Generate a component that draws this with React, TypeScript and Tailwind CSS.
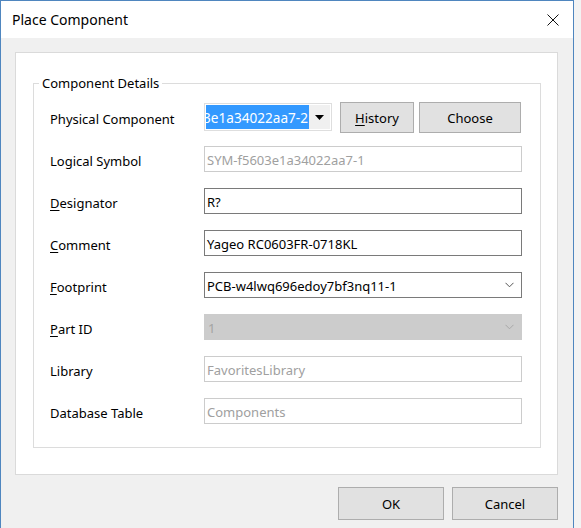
import React from "react";

const font = "font-['Noto_Sans','Open_Sans',sans-serif]";

function U({ children }: { children: React.ReactNode }) {
  return <span className="underline underline-offset-2 decoration-1">{children}</span>;
}

function Chevron({ color }: { color: string }) {
  return (
    <svg width="9" height="6" viewBox="0 0 9 6" className="shrink-0">
      <path d="M0.5 0.8 L4.5 4.8 L8.5 0.8" fill="none" stroke={color} strokeWidth="1" />
    </svg>
  );
}

function Label({ children }: { children: React.ReactNode }) {
  return <div className="text-[13px] leading-[18px] text-black pt-[4px]">{children}</div>;
}

function Row({ label, children }: { label: React.ReactNode; children: React.ReactNode }) {
  return (
    <div className="grid grid-cols-[154px_1fr] items-center h-[42px]">
      <Label>{label}</Label>
      {children}
    </div>
  );
}

function TextBox({ value, disabled }: { value: string; disabled?: boolean }) {
  return (
    <div
      className={
        "h-[26px] w-[318px] border flex items-center pl-[2px] text-[13px] leading-[18px] bg-white " +
        (disabled ? "border-[#cccccc] text-[#a0a0a0]" : "border-[#7a7a7a] text-black")
      }
    >
      <span className="pt-[1px]">{value}</span>
    </div>
  );
}

export default function App() {
  return (
    <div className={"w-[581px] h-[528px] bg-[#f3f3f3] overflow-hidden " + font}>
      <div className="w-[574px] h-[528px] border-x border-t border-[#4f86bf] bg-[#f0f0f0] flex flex-col">
        {/* Title bar */}
        <div className="h-[37px] bg-white flex items-center justify-between pl-[11px] pr-[14px] shrink-0">
          <span className="text-[14px] leading-[20px] text-black pt-[1px]">Place Component</span>
          <svg width="12" height="12" viewBox="0 0 12 12">
            <path d="M0.5 0.5 L11.5 11.5 M11.5 0.5 L0.5 11.5" stroke="#111" strokeWidth="1" />
          </svg>
        </div>

        {/* Body */}
        <div className="pl-[14px] pt-[14px] flex flex-col">
          <div className="w-[543px] h-[423px] bg-white border border-[#dadada] pl-[17px] pt-[21px]">
            <fieldset className="w-[508px] h-[374px] border border-[#dcdcdc] px-[5px] pt-[4px]">
              <legend className="px-[3px] text-[13px] leading-[18px] text-black">Component Details</legend>
              <div className="pl-[11px] pr-[12px] flex flex-col">
                <Row label="Physical Component">
                  <div className="flex items-center">
                    <div className="h-[28px] w-[128px] border border-[#dedede] flex items-stretch bg-white p-[1px]">
                      <div className="w-[103px] bg-[#3399ff] overflow-hidden flex items-center justify-end pr-[1px]">
                        <span className="text-white text-[13.6px] leading-[18px] whitespace-nowrap pt-[1px]">
                          3e1a34022aa7-2
                        </span>
                      </div>
                      <div className="flex-1 bg-[#f0f0f0] flex items-center justify-center">
                        <svg width="9" height="5" viewBox="0 0 9 5">
                          <path d="M0 0 L9 0 L4.5 5 Z" fill="#000" />
                        </svg>
                      </div>
                    </div>
                    <button className="ml-[8px] h-[31px] w-[74px] bg-[#e1e1e1] border border-[#adadad] text-[13px] leading-[18px] text-black pt-[1px]">
                      <U>H</U>istory
                    </button>
                    <button className="ml-[5px] h-[31px] w-[102px] bg-[#e1e1e1] border border-[#adadad] text-[13px] leading-[18px] text-black pt-[1px]">
                      Choose
                    </button>
                  </div>
                </Row>
                <Row label="Logical Symbol">
                  <TextBox value="SYM-f5603e1a34022aa7-1" disabled />
                </Row>
                <Row label={<><U>D</U>esignator</>}>
                  <TextBox value="R?" />
                </Row>
                <Row label={<><U>C</U>omment</>}>
                  <TextBox value="Yageo RC0603FR-0718KL" />
                </Row>
                <Row label={<><U>F</U>ootprint</>}>
                  <div className="h-[26px] w-[318px] border border-[#7a7a7a] bg-white flex items-center justify-between pl-[2px] pr-[7px] text-[13px] leading-[18px] text-black">
                    <span className="pt-[1px]">PCB-w4lwq696edoy7bf3nq11-1</span>
                    <Chevron color="#555555" />
                  </div>
                </Row>
                <Row label={<><U>P</U>art ID</>}>
                  <div className="h-[26px] w-[318px] border border-[#cccccc] bg-[#cccccc] flex items-center justify-between pl-[3px] pr-[7px] text-[13px] leading-[18px] text-[#a3a3a3]">
                    <span className="pt-[1px]">1</span>
                    <Chevron color="#a8a8a8" />
                  </div>
                </Row>
                <Row label="Library">
                  <TextBox value="FavoritesLibrary" disabled />
                </Row>
                <Row label="Database Table">
                  <TextBox value="Components" disabled />
                </Row>
              </div>
            </fieldset>
          </div>

          {/* Buttons */}
          <div className="w-[543px] flex justify-end gap-[8px] mt-[12px]">
            <button className="h-[33px] w-[106px] bg-[#e1e1e1] border border-[#adadad] text-[13px] leading-[18px] text-black pt-[1px]">
              OK
            </button>
            <button className="h-[33px] w-[106px] bg-[#e1e1e1] border border-[#adadad] text-[13px] leading-[18px] text-black pt-[1px]">
              Cancel
            </button>
          </div>
        </div>
      </div>
    </div>
  );
}
